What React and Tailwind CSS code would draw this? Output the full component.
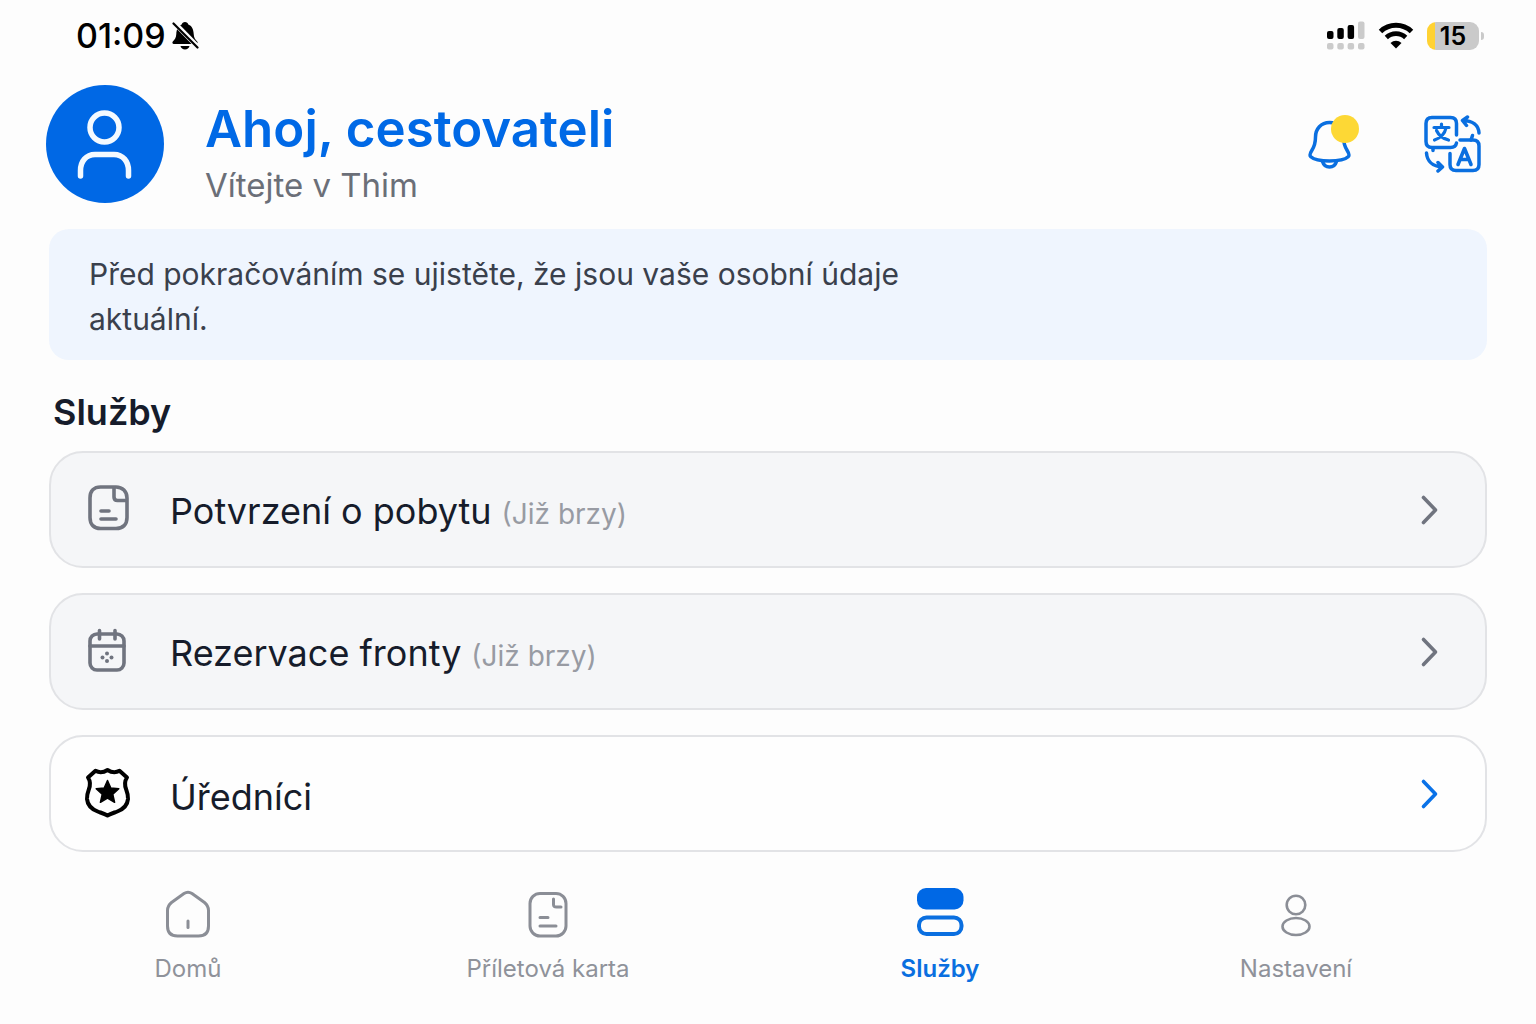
import React from 'react';

function SilentIcon() {
  return (
    <svg width="28" height="30" viewBox="0 0 28 30" fill="none" aria-hidden="true">
      <path d="M14 1c-1.700 0-3 1-3.300 2.400C6.500 5 5.500 9 5.300 13c-.2 4-1.500 5.500-3.500 7.500-.8.900-.4 2.500 1 2.500h22.400c1.400 0 1.800-1.600 1-2.500-2-2-3.300-3.500-3.500-7.500-.2-4-1.200-8-5.400-9.600C17 2 15.700 1 14 1Z" fill="#000" />
      <path d="M9.500 25h9c-.5 2.300-2.300 3.500-4.500 3.500S10 27.300 9.500 25Z" fill="#000" />
      <path d="M3 1.500 27.500 26.500" stroke="#fdfdfd" strokeWidth="5" />
      <path d="M2.500 2.500 26.500 26.500" stroke="#000" strokeWidth="2.200" strokeLinecap="round" />
    </svg>
  );
}

function SignalIcon() {
  return (
    <svg width="38" height="30" viewBox="0 0 38 30" aria-hidden="true">
      <g fill="#000">
        <rect x="0" y="10" width="6.500" height="8" rx="2" />
        <rect x="10.300" y="7" width="6.500" height="11" rx="2" />
        <rect x="20.600" y="4" width="6.500" height="14" rx="2" />
      </g>
      <g fill="#cbcbcb">
        <rect x="31" y="0.500" width="6.500" height="17.500" rx="2" />
        <rect x="0" y="22" width="6.500" height="6.500" rx="2" />
        <rect x="10.300" y="22" width="6.500" height="6.500" rx="2" />
        <rect x="20.600" y="22" width="6.500" height="6.500" rx="2" />
        <rect x="31" y="22" width="6.500" height="6.500" rx="2" />
      </g>
    </svg>
  );
}

function WifiIcon() {
  return (
    <svg width="36" height="28" viewBox="0 0 36 28" fill="none" stroke="#000" aria-hidden="true">
      <path d="M2.500 9.500a22.500 22.500 0 0 1 31 0" strokeWidth="5" />
      <path d="M8.300 15.500a14 14 0 0 1 19.400 0" strokeWidth="4.600" />
      <path d="M18 26.500 12.500 21a8 8 0 0 1 11 0Z" fill="#000" stroke="none" />
    </svg>
  );
}

function AvatarIcon() {
  return (
    <svg width="58" height="72" viewBox="0 0 58 72" fill="none" stroke="#f4faff" strokeWidth="5.500" strokeLinecap="round" aria-hidden="true">
      <circle cx="28.500" cy="19.500" r="14.500" />
      <path d="M4.500 68v-5.500c0-9 5.500-16 14.500-16h19c9 0 14.500 7 14.500 16V68" />
    </svg>
  );
}

function BellIcon() {
  return (
    <svg width="44" height="50" viewBox="0 0 44 50" fill="none" stroke="#0a6fe0" strokeWidth="3.500" strokeLinecap="round" strokeLinejoin="round" aria-hidden="true">
      <path d="M21.500 3.500C13 3.500 7.500 10 7.500 18c0 6-.5 8.500-3.700 13.500-1.900 3-2.600 4.800-1 6.300C5 39.800 12 42 21.500 42s16.500-2.200 18.700-4.200c1.600-1.500.9-3.300-1-6.300C36 26.500 35.500 24 35.500 18c0-8-5.500-14.500-14-14.500Z" />
      <path d="M14.500 42.500c1.200 4 3.500 5.500 7 5.500s5.800-1.500 7-5.500" />
    </svg>
  );
}

function TranslateIcon() {
  return (
    <svg width="58" height="58" viewBox="0 0 58 58" fill="none" stroke="#0a6fe0" strokeWidth="3.500" strokeLinecap="round" strokeLinejoin="round" aria-hidden="true">
      <path d="M32.500 20V8.500c0-4-2-6-6-6H8c-4 0-6 2-6 6v18c0 4 2 6 6 6h18.500c3.500 0 5.500-1.700 6-4.500" />
      <path d="M36 25h13c4 0 6 2 6 6v18.500c0 4-2 6-6 6H32c-4 0-6-2-6-6V38.500" />
      <path d="M48.500 20.500 47 25M9 33v2.500" />
      <path d="M10 12.500h15M17.500 9v3.500M22 13c-1.300 6-5.500 10-11.500 12M12.500 15.500c2.300 5 6 8 12 9.500" strokeWidth="3.200" />
      <path d="m34 49.500 6.500-16 6.500 16M36.500 44.500h8" strokeWidth="3.600" />
      <path d="M55 18C54.500 10.500 49 5.500 38.500 5.500M43.500 2l-5 3.500 4 5" />
      <path d="M2.500 38c.5 8 6 13.500 16 14M14 47.500l4.500 4.500-4.500 4" />
    </svg>
  );
}

function DocumentIcon() {
  return (
    <svg width="42" height="46" viewBox="-1 3 42 46" fill="none" stroke="#70747f" strokeWidth="3.600" strokeLinecap="round" strokeLinejoin="round" className="overflow-visible" aria-hidden="true">
      <path d="M12.500 3h15.500C34.500 3 39 7.500 39 14v19.500c0 7-4 11-11 11H12.500C6 44.500 2 40.500 2 33.500V14C2 7 6 3 12.500 3Z" />
      <path d="M26 4v9c0 2.500 1 3.500 3.500 3.500H38M13 27h8M13 35h15" />
    </svg>
  );
}

function CalendarIcon() {
  return (
    <svg width="42" height="46" viewBox="-1 2 42 46" fill="none" stroke="#70747f" strokeWidth="3.600" strokeLinecap="round" strokeLinejoin="round" className="overflow-visible" aria-hidden="true">
      <rect x="2" y="7" width="34" height="36" rx="7" />
      <path d="M2 19h34M11.500 3.500v8.500M27 3.500v8.500" />
      <g fill="#70747f" stroke="none">
        <circle cx="19" cy="26.500" r="2" />
        <circle cx="14.500" cy="30.500" r="2" />
        <circle cx="23.500" cy="30.500" r="2" />
        <circle cx="19" cy="34" r="2" />
      </g>
    </svg>
  );
}

function BadgeIcon() {
  return (
    <svg width="46" height="52" viewBox="0 1 46 52" fill="none" stroke="#000" strokeWidth="4" strokeLinejoin="round" className="overflow-visible" aria-hidden="true">
      <path d="M22.500 3c-4 2.500-8 3-12 .8L3 10.500c2.700 4 2.700 7 .8 12C2.300 26.500 1.800 29 2 32c.6 6.500 5 10.300 10.700 12.500 4 1.500 6.800 2.300 9.800 4 3-1.700 5.800-2.500 9.800-4C38 42.300 42.400 38.500 43 32c.2-3-.3-5.500-1.800-9.500-1.900-5-1.900-8 .8-12l-7.500-6.700c-4 2.200-8 1.700-12-.8Z" />
      <path d="m22.500 13.500 3.300 7.500 8 .8-6 5.500 1.800 8-7.100-4.200-7.100 4.200 1.800-8-6-5.500 8-.8Z" fill="#000" strokeWidth="1.500" />
    </svg>
  );
}

function ChevronIcon({ color }) {
  return (
    <svg width="20" height="32" viewBox="0 0 20 32" fill="none" stroke={color} strokeWidth="3.600" strokeLinecap="round" strokeLinejoin="round" aria-hidden="true">
      <path d="m4.500 3.500 12 12.500-12 12.500" />
    </svg>
  );
}

function HomeIcon() {
  return (
    <svg width="46" height="50" viewBox="0 0 46 50" fill="none" stroke="#8b8e96" strokeWidth="3" strokeLinecap="round" strokeLinejoin="round" aria-hidden="true">
      <path d="M19 5.500 6.500 14.500C3.500 17 2.500 19 2.500 22.500V38c0 6.500 3.500 10 10 10h21c6.500 0 10-3.500 10-10V22.500c0-3.500-1-5.500-4-8L27 5.500c-3-2-5-2-8 0Z" />
      <path d="M23 33v6.500" />
    </svg>
  );
}

function CardIcon() {
  return (
    <svg width="40" height="50" viewBox="0 0 40 50" fill="none" stroke="#8b8e96" strokeWidth="3" strokeLinecap="round" strokeLinejoin="round" aria-hidden="true">
      <rect x="2" y="5.500" width="36" height="42.500" rx="10" />
      <path d="M25.500 11v5.500c0 2 .8 2.500 3 2.500H33M12 29.500h8M12 38h16" />
    </svg>
  );
}

function ServicesIcon() {
  return (
    <svg width="48" height="50" viewBox="0 0 48 50" fill="none" aria-hidden="true">
      <rect x="1" y="0" width="46.500" height="21.500" rx="9" fill="#0068e5" />
      <rect x="3" y="29.500" width="42.500" height="16.500" rx="7.500" stroke="#0a6fe0" strokeWidth="4" />
    </svg>
  );
}

function ProfileIcon() {
  return (
    <svg width="32" height="50" viewBox="0 0 32 50" fill="none" stroke="#8b8e96" strokeWidth="2.600" aria-hidden="true">
      <circle cx="16" cy="17" r="9.300" />
      <ellipse cx="16" cy="38.500" rx="13.500" ry="8.500" />
    </svg>
  );
}

const services = [
  { title: 'Potvrzení o pobytu', icon: <DocumentIcon />, soon: true },
  { title: 'Rezervace fronty', icon: <CalendarIcon />, soon: true },
  { title: 'Úředníci', icon: <BadgeIcon />, soon: false },
];

const tabs = [
  { label: 'Domů', icon: <HomeIcon /> },
  { label: 'Příletová karta', icon: <CardIcon /> },
  { label: 'Služby', icon: <ServicesIcon />, active: true },
  { label: 'Nastavení', icon: <ProfileIcon /> },
];

export default function App() {
  return (
    <div className="min-h-screen flex flex-col bg-[#fdfdfd] font-[Inter,sans-serif] text-[#161c2b]">
      {/* Status bar */}
      <div className="h-[72px] pl-[76px] pr-[52px] flex items-center justify-between">
        <div className="flex items-center gap-[5px] text-black">
          <span className="text-[34px] leading-[40px] font-medium">01:09</span>
          <SilentIcon />
        </div>
        <div className="flex items-center gap-[13px]">
          <SignalIcon />
          <WifiIcon />
          <div className="flex items-center gap-[2px]">
            <div className="w-[52px] h-[28px] rounded-[9px] bg-linear-to-r from-[#ffd233] from-[15%] to-[#cacaca] to-[15%] text-black text-[25px] leading-[28px] font-semibold text-center">
              15
            </div>
            <div className="w-[3px] h-[8px] rounded-r-full bg-[#cacaca]" />
          </div>
        </div>
      </div>

      {/* Greeting */}
      <header className="pl-[46px] pr-[54px] pt-[13px] flex items-start justify-between">
        <div className="flex items-start gap-[41px]">
          <div className="size-[118px] rounded-full bg-[#0068e5] flex items-center justify-center">
            <AvatarIcon />
          </div>
          <div className="pt-[14px]">
            <h1 className="text-[51px] leading-[60px] font-semibold text-[#0069e6]">Ahoj, cestovateli</h1>
            <p className="text-[33px] leading-[52px] text-[#6b6f78]">Vítejte v Thim</p>
          </div>
        </div>
        <div className="h-[118px] flex items-center gap-[72px]">
          <button aria-label="Oznámení" className="relative">
            <BellIcon />
            <span className="absolute -top-1 -right-[7px] size-7 rounded-full bg-[#fdd835]" />
          </button>
          <button aria-label="Změnit jazyk">
            <TranslateIcon />
          </button>
        </div>
      </header>

      {/* Services */}
      <main className="px-[49px] pt-[18px]">
        <div className="rounded-[20px] bg-[#eff5fe] px-10 pt-[23px] pb-[18px]">
          <p className="max-w-[860px] text-[30px] leading-[45px] text-[#3a404c]">
            Před pokračováním se ujistěte, že jsou vaše osobní údaje aktuální.
          </p>
        </div>

        <h2 className="px-1 pt-7 pb-[15px] text-[36px] leading-[48px] font-semibold">Služby</h2>

        <div className="flex flex-col gap-[25px]">
          {services.map((service) => (
            <button
              key={service.title}
              className={`h-[117px] w-full rounded-[34px] border-2 border-[#e2e3e6] pl-[34px] pr-[46px] flex items-center text-left ${service.soon ? 'bg-[#f5f6f8]' : 'bg-[#fefefe]'}`}
            >
              <span className="w-[46px] flex justify-center">{service.icon}</span>
              <span className="pl-[39px] pt-[6px] flex items-baseline gap-[10px] text-[36px] leading-[44px]">
                {service.title}
                {service.soon && <span className="text-[28px] text-[#989ba3]">(Již brzy)</span>}
              </span>
              <span className="ml-auto">
                <ChevronIcon color={service.soon ? '#70747f' : '#0a72e8'} />
              </span>
            </button>
          ))}
        </div>
      </main>

      {/* Bottom navigation */}
      <nav className="pt-9 pb-9 pl-2 pr-24 grid grid-cols-[45fr_45fr_53fr_36fr]">
        {tabs.map((tab) => (
          <a
            key={tab.label}
            href="#"
            className={`flex flex-col items-center gap-[15px] text-[24px] leading-[32px] ${tab.active ? 'font-semibold text-[#0a6fe0]' : 'text-[#8f929a]'}`}
          >
            {tab.icon}
            {tab.label}
          </a>
        ))}
      </nav>
    </div>
  );
}
